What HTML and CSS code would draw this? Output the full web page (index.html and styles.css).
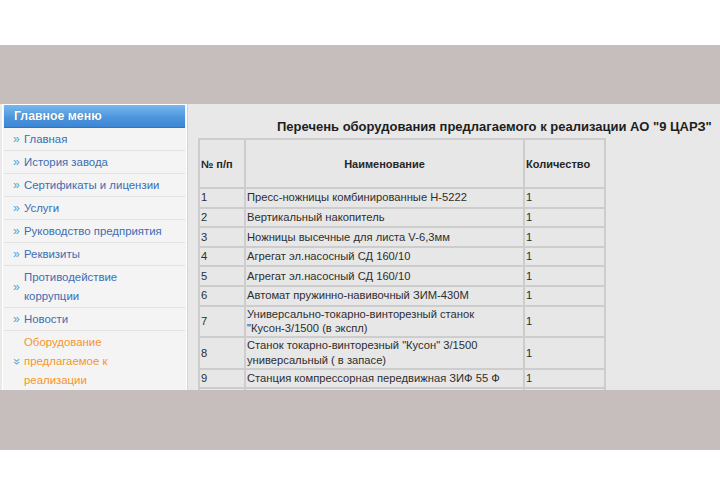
FILE: index.html
```html
<!DOCTYPE html>
<html lang="ru">
<head>
<meta charset="utf-8">
<title>Перечень оборудования</title>
<link rel="stylesheet" href="styles.css">
</head>
<body>
<div class="top"></div>
<div class="band"></div>
<div class="content">
  <aside class="sidebar">
    <div class="menu-title">Главное меню</div>
    <ul class="menu">
      <li class="item"><span class="chev">»</span><span class="label">Главная</span></li>
      <li class="item"><span class="chev">»</span><span class="label">История завода</span></li>
      <li class="item"><span class="chev">»</span><span class="label">Сертификаты и лицензии</span></li>
      <li class="item"><span class="chev">»</span><span class="label">Услуги</span></li>
      <li class="item"><span class="chev">»</span><span class="label">Руководство предприятия</span></li>
      <li class="item"><span class="chev">»</span><span class="label">Реквизиты</span></li>
      <li class="item"><span class="chev">»</span><span class="label">Противодействие<br>коррупции</span></li>
      <li class="item"><span class="chev">»</span><span class="label">Новости</span></li>
      <li class="item active"><span class="chev down">»</span><span class="label">Оборудование<br>предлагаемое к<br>реализации</span></li>
    </ul>
  </aside>
  <main class="main">
    <h1 class="title">Перечень оборудования предлагаемого к реализации АО "9 ЦАРЗ"</h1>
    <table class="list">
      <colgroup><col class="c1"><col class="c2"><col class="c3"></colgroup>
      <thead>
        <tr><th class="num">№ п/п</th><th class="name">Наименование</th><th class="qty">Количество</th></tr>
      </thead>
      <tbody>
        <tr><td>1</td><td>Пресс-ножницы комбинированные Н-5222</td><td>1</td></tr>
        <tr><td>2</td><td>Вертикальный накопитель</td><td>1</td></tr>
        <tr><td>3</td><td>Ножницы высечные для листа V-6,3мм</td><td>1</td></tr>
        <tr><td>4</td><td>Агрегат эл.насосный СД 160/10</td><td>1</td></tr>
        <tr><td>5</td><td>Агрегат эл.насосный СД 160/10</td><td>1</td></tr>
        <tr><td>6</td><td>Автомат пружинно-навивочный ЗИМ-430М</td><td>1</td></tr>
        <tr><td>7</td><td>Универсально-токарно-винторезный станок<br>"Кусон-3/1500 (в экспл)</td><td>1</td></tr>
        <tr><td>8</td><td>Станок токарно-винторезный "Кусон" 3/1500<br>универсальный ( в запасе)</td><td>1</td></tr>
        <tr><td>9</td><td>Станция компрессорная передвижная ЗИФ 55 Ф</td><td>1</td></tr>
        <tr><td></td><td></td><td></td></tr>
      </tbody>
    </table>
  </main>
</div>
<div class="band bottom"></div>
</body>
</html>
```
FILE: styles.css
```css
html, body {
  margin: 0;
  padding: 0;
  background: #ffffff;
  font-family: "Liberation Sans", Arial, sans-serif;
}
.top {
  height: 45px;
  background: #ffffff;
}
.band {
  height: 59px;
  background: #c6bebd;
}
.band.bottom {
  height: 60px;
}
.content {
  height: 286px;
  overflow: hidden;
  display: flex;
  align-items: flex-start;
  background: #e9e9e9;
}
.sidebar {
  flex: none;
  width: 181px;
  margin-left: 2px;
  padding: 0 1px;
  background: #f4f4f4;
  border: 1px solid #ffffff;
  border-bottom: 0;
  min-height: 400px;
}
.menu-title {
  height: 22px;
  line-height: 22px;
  padding-left: 10px;
  color: #ffffff;
  font-weight: bold;
  font-size: 12.3px;
  background: linear-gradient(#79b8ee, #4d96de 55%, #3c86d3);
  border-bottom: 1px solid #2f74bd;
  text-shadow: 0 0 1px rgba(0, 0, 0, 0.3);
}
.menu {
  list-style: none;
  margin: 0;
  padding: 0;
}
.item {
  display: flex;
  align-items: center;
  padding: 2px 0 1px 9px;
  line-height: 19px;
  font-size: 11.4px;
  color: #3d6db2;
  border-bottom: 1px solid #e2e2e2;
}
.chev {
  width: 11px;
  flex: none;
  color: #4aa6da;
  font-size: 12px;
}
.chev.down {
  display: inline-block;
  transform: rotate(90deg);
  width: 7px;
  margin-right: 4px;
  text-align: center;
}
.item.active {
  color: #f7942a;
}
.main {
  flex: 1;
  align-self: stretch;
  background: #e8e8e8;
  border-left: 1px solid #d4d4d4;
}
.title {
  margin: 15px 0 3px 89px;
  font-size: 13px;
  line-height: 16px;
  font-weight: bold;
  color: #1e1e1e;
  white-space: nowrap;
}
.list {
  margin-left: 10px;
  border-collapse: collapse;
  table-layout: fixed;
  width: 406px;
  font-size: 11.2px;
  color: #2e2e2e;
  background: #e7e7e7;
  border: 2px solid #cfcfcf;
}
.c1 { width: 46px; }
.c2 { width: 279px; }
.c3 { width: 81px; }
.list th, .list td {
  border: 2px solid #cdcdcd;
  padding: 0 1px;
  text-align: left;
  vertical-align: middle;
}
.list th {
  height: 47px;
  font-size: 11px;
  font-weight: bold;
  color: #262626;
}
.list th.name {
  text-align: center;
}
.list td {
  height: 17.6px;
  line-height: 14.8px;
}
```
